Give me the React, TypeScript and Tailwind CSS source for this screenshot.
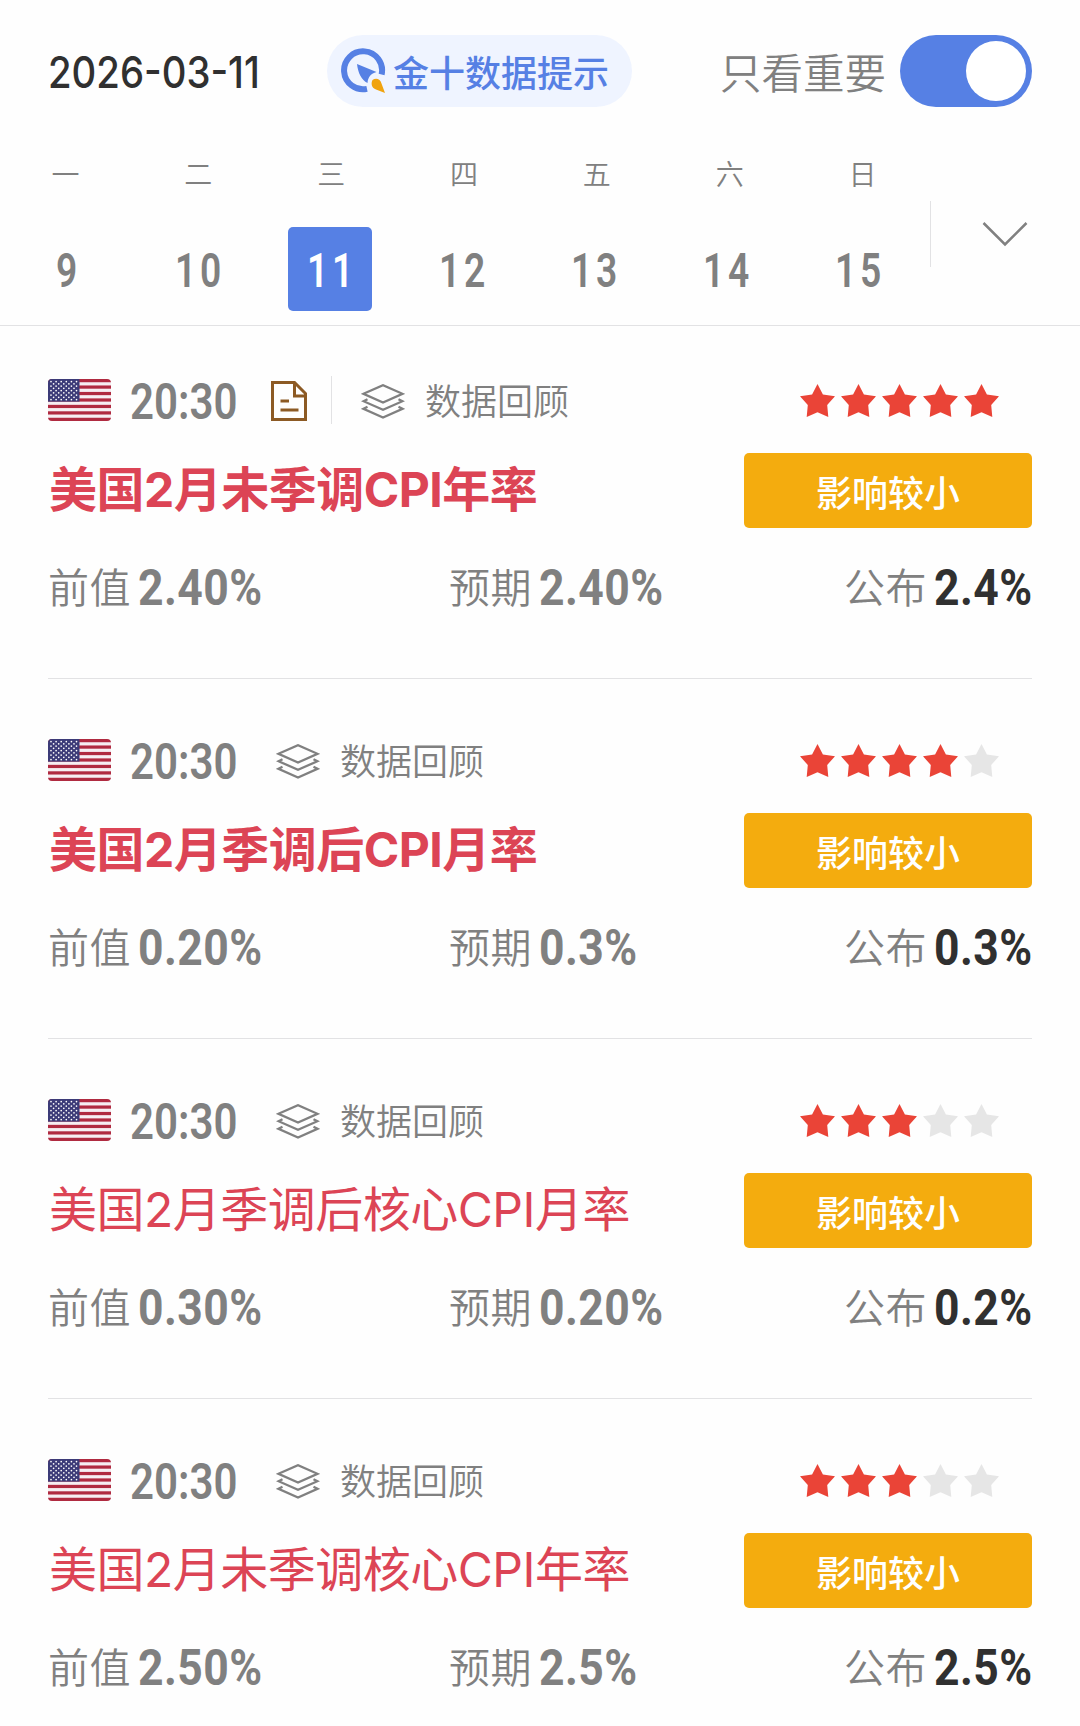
import { useState } from 'react';
import clsx from 'clsx';

const weekdays = ['一', '二', '三', '四', '五', '六', '日'];
const days = [9, 10, 11, 12, 13, 14, 15];

const events = [
  { title: '美国2月未季调CPI年率', time: '20:30', stars: 5, bold: true, hasDoc: true, previous: '2.40%', forecast: '2.40%', actual: '2.4%' },
  { title: '美国2月季调后CPI月率', time: '20:30', stars: 4, bold: true, hasDoc: false, previous: '0.20%', forecast: '0.3%', actual: '0.3%' },
  { title: '美国2月季调后核心CPI月率', time: '20:30', stars: 3, bold: false, hasDoc: false, previous: '0.30%', forecast: '0.20%', actual: '0.2%' },
  { title: '美国2月未季调核心CPI年率', time: '20:30', stars: 3, bold: false, hasDoc: false, previous: '2.50%', forecast: '2.5%', actual: '2.5%' },
];

function TipLogo() {
  return (
    <svg width="46" height="46" viewBox="0 0 46 46" fill="none">
      <path d="M41.6 26.5A19 19 0 1 0 27 40.9" stroke="#5680e4" strokeWidth="6" />
      <path d="M17 16L36.5 24C31 25.5 28 29 27.5 35C21.5 32 18 25 17 16Z" fill="#5680e4" />
      <path d="M32.5 32C36 29.5 40.5 31 41.5 35.5L45 45L36 41.5C32 40 30.5 36 32.5 32Z" fill="#f0a30f" />
    </svg>
  );
}

function Flag() {
  const stars = [];
  for (let row = 0; row < 9; row++) {
    for (let col = 0; col < (row % 2 ? 5 : 6); col++) {
      stars.push(<circle key={`${row}-${col}`} cx={3 + col * 5.1 + (row % 2 ? 2.6 : 0)} cy={2.6 + row * 2.25} r="0.85" fill="#fff" />);
    }
  }
  return (
    <svg width="63" height="42" viewBox="0 0 63 42" className="rounded">
      <rect width="63" height="42" fill="#f6eef2" />
      {[0, 1, 2, 3, 4, 5, 6].map((i) => (
        <rect key={i} y={i * 6.46} width="63" height="3.23" fill="#b02a40" />
      ))}
      <rect width="31.5" height="22.6" fill="#3c3b78" />
      {stars}
    </svg>
  );
}

function DocIcon() {
  return (
    <svg className="mt-0.5" width="36" height="40" viewBox="0 0 36 40" fill="none" stroke="#8c5a24" strokeWidth="3">
      <path d="M1.5 1.5H23.5L34.5 12.5V38.5H1.5Z" />
      <path d="M23.5 1.5V15H34.5M9.5 20H18M9.5 29H27.5" />
    </svg>
  );
}

function LayersIcon() {
  return (
    <svg className="mt-0.5" width="44" height="35" viewBox="0 0 44 35" fill="none" stroke="#808080" strokeWidth="2.3">
      <path d="M2.5 9.8L22 1.2L41.5 9.8L22 18.6Z" />
      <path d="M6.5 15.2L2.5 17.2L22 25.8L41.5 17.2L37.5 15.2" />
      <path d="M6.5 22.8L2.5 24.8L22 33.6L41.5 24.8L37.5 22.8" />
    </svg>
  );
}

function Star({ active }: { active: boolean }) {
  return (
    <svg width="35" height="33" viewBox="0 0 35 33" className={active ? 'fill-[#ea4437]' : 'fill-[#e6e6e6]'}>
      <path d="M17.5 0L22.9 10.4L35 12.2L27.2 21L28.3 33L17.5 28.2L6.7 33L7.8 21L0 12.2L12.1 10.4Z" />
    </svg>
  );
}

function Figure({ label, value, strong = false }: { label: string; value: string; strong?: boolean }) {
  return (
    <div className="flex h-[50px] items-center">
      <span className="w-[90px] shrink-0 pt-0.5 text-[41px] font-[350] tracking-[0.5px]">{label}</span>
      <span
        className={clsx(
          "inline-block origin-left scale-x-[0.89] pt-0.5 font-['Roboto'] text-[50px] font-bold tracking-[0.5px]",
          strong && 'text-[#303030]'
        )}
      >
        {value}
      </span>
    </div>
  );
}

function EventItem({ event }: { event: (typeof events)[number] }) {
  return (
    <li className="mx-12 border-b border-[#e2e2e4] pt-14 pb-[66px] first:pt-[49px]">
      <div className="flex h-[50px] items-center">
        <Flag />
        <span className="ml-[19px] inline-block w-[109px] origin-left scale-x-[0.84] pt-[3px] font-['Roboto'] text-[50px] font-semibold">
          {event.time}
        </span>
        {event.hasDoc ? (
          <div className="mr-[29px] ml-8 flex items-center gap-6">
            <DocIcon />
            <div className="h-12 w-px bg-[#e2e2e4]" />
          </div>
        ) : (
          <div className="w-[37px]" />
        )}
        <LayersIcon />
        <span className="ml-5 pt-1 text-[36px] font-[350]">数据回顾</span>
        <div className="mr-[33px] ml-auto flex gap-1.5">
          {[1, 2, 3, 4, 5].map((n) => (
            <Star key={n} active={n <= event.stars} />
          ))}
        </div>
      </div>

      <div className="mt-7 flex h-[75px] items-center justify-between">
        <h2
          className={clsx(
            'pb-0.5 pl-px text-[48px] tracking-[-0.5px] whitespace-nowrap text-[#dc4455]',
            event.bold ? 'font-bold' : 'font-[380]'
          )}
        >
          {event.title}
        </h2>
        <button className="h-[75px] w-[288px] rounded-[5px] bg-[#f4ac0e] pt-1.5 text-[36px] font-medium text-white">
          影响较小
        </button>
      </div>

      <div className="mt-[34px] grid grid-cols-[401px_395px_1fr]">
        <Figure label="前值" value={event.previous} />
        <Figure label="预期" value={event.forecast} />
        <Figure label="公布" value={event.actual} strong />
      </div>
    </li>
  );
}

export default function App() {
  const [onlyImportant, setOnlyImportant] = useState(true);
  const [selected, setSelected] = useState(11);

  return (
    <div className="h-[1726px] w-[1080px] overflow-hidden bg-[#fefefe] font-['Inter','Noto_Sans_CJK_SC',sans-serif] leading-none text-[#808080]">
      <header className="h-[326px] border-b border-[#e2e2e4] pt-[35px]">
        <div className="flex h-[72px] items-center pr-12 pl-12">
          <div className="w-[279px]">
            <span className="inline-block origin-left scale-x-[0.87] pt-0.5 text-[44px] font-medium text-[#303030]">2026-03-11</span>
          </div>
          <div className="flex h-[72px] w-[305px] items-center gap-[7px] rounded-full bg-[#eff4ff] pl-[13px]">
            <TipLogo />
            <span className="pt-1.5 text-[36px] font-medium whitespace-nowrap text-[#5680e4]">金十数据提示</span>
          </div>
          <span className="ml-auto pt-2 text-[41.5px] font-[350]">只看重要</span>
          <button
            onClick={() => setOnlyImportant(!onlyImportant)}
            className={clsx('ml-3.5 flex h-[72px] w-[132px] items-center rounded-full px-1.5', onlyImportant ? 'justify-end bg-[#5680e4]' : 'bg-gray-300')}
          >
            <span className="size-[60px] rounded-full bg-white" />
          </button>
        </div>

        {/* Week strip */}
        <div className="flex">
          <div className="w-[930px]">
            <div className="mt-[52px] grid grid-cols-7">
              {weekdays.map((name) => (
                <span key={name} className="h-8 pr-0.5 text-center text-[28px] leading-8 font-[350]">
                  {name}
                </span>
              ))}
            </div>
            <div className="mt-9 mr-1.5 grid grid-cols-7">
              {days.map((day) => (
                <button
                  key={day}
                  onClick={() => setSelected(day)}
                  className={clsx('mx-auto flex size-[84px] items-center justify-center rounded-[5px]', day === selected && 'bg-[#5680e4] text-white')}
                >
                  <span className="-mr-1 inline-block scale-x-[0.76] pt-[3px] font-['Roboto'] text-[49px] font-semibold tracking-[5px]">
                    {day}
                  </span>
                </button>
              ))}
            </div>
          </div>
          <div className="mt-[94px] h-[66px] w-px bg-[#e2e2e4]" />
          <svg className="mt-[114px] ml-[51px]" width="46" height="26" viewBox="0 0 46 26" fill="none" stroke="#808080" strokeWidth="2.5">
            <path d="M1.5 2L23 23.5L44.5 2" />
          </svg>
        </div>
      </header>

      <ul>
        {events.map((event) => (
          <EventItem key={event.title} event={event} />
        ))}
      </ul>
    </div>
  );
}
